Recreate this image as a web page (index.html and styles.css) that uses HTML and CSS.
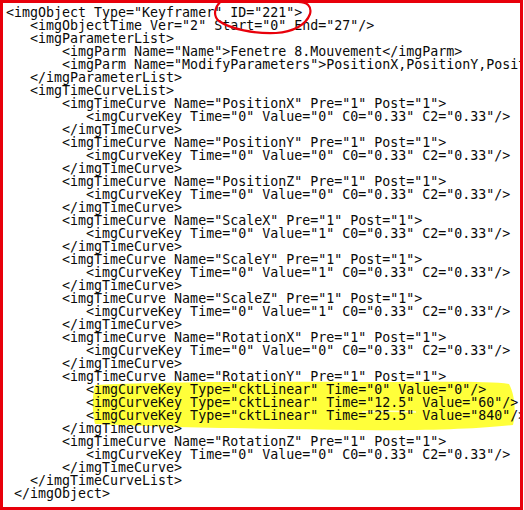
FILE: index.html
```html
<!DOCTYPE html>
<html lang="en">
<head>
<meta charset="utf-8">
<title>imgObject XML</title>
<link rel="stylesheet" href="styles.css">
</head>
<body>
<div class="frame">
<svg class="marker" width="523" height="510" viewBox="0 0 523 510" aria-hidden="true">
  <path class="highlight" d="M95 385 C150 382 260 381 380 382 C440 382 490 381 509 384 C515 395 516 412 513 425 C480 429 420 431 360 430 C260 429 160 427 95 424 C92 412 92 396 95 385 Z"/>
  <path class="streak" d="M362 412 C380 411 400 411 416 412"/>
</svg>
<pre class="code">&lt;imgObject Type="Keyframer" ID="221"&gt;
   &lt;imgObjectTime Ver="2" Start="0" End="27"/&gt;
   &lt;imgParameterList&gt;
       &lt;imgParm Name="Name"&gt;Fenetre 8.Mouvement&lt;/imgParm&gt;
       &lt;imgParm Name="ModifyParameters"&gt;PositionX,PositionY,PositionZ,ScaleX,ScaleY,ScaleZ&lt;/imgParm&gt;
   &lt;/imgParameterList&gt;
   &lt;imgTimeCurveList&gt;
       &lt;imgTimeCurve Name="PositionX" Pre="1" Post="1"&gt;
          &lt;imgCurveKey Time="0" Value="0" C0="0.33" C2="0.33"/&gt;
       &lt;/imgTimeCurve&gt;
       &lt;imgTimeCurve Name="PositionY" Pre="1" Post="1"&gt;
          &lt;imgCurveKey Time="0" Value="0" C0="0.33" C2="0.33"/&gt;
       &lt;/imgTimeCurve&gt;
       &lt;imgTimeCurve Name="PositionZ" Pre="1" Post="1"&gt;
          &lt;imgCurveKey Time="0" Value="0" C0="0.33" C2="0.33"/&gt;
       &lt;/imgTimeCurve&gt;
       &lt;imgTimeCurve Name="ScaleX" Pre="1" Post="1"&gt;
          &lt;imgCurveKey Time="0" Value="1" C0="0.33" C2="0.33"/&gt;
       &lt;/imgTimeCurve&gt;
       &lt;imgTimeCurve Name="ScaleY" Pre="1" Post="1"&gt;
          &lt;imgCurveKey Time="0" Value="1" C0="0.33" C2="0.33"/&gt;
       &lt;/imgTimeCurve&gt;
       &lt;imgTimeCurve Name="ScaleZ" Pre="1" Post="1"&gt;
          &lt;imgCurveKey Time="0" Value="1" C0="0.33" C2="0.33"/&gt;
       &lt;/imgTimeCurve&gt;
       &lt;imgTimeCurve Name="RotationX" Pre="1" Post="1"&gt;
          &lt;imgCurveKey Time="0" Value="0" C0="0.33" C2="0.33"/&gt;
       &lt;/imgTimeCurve&gt;
       &lt;imgTimeCurve Name="RotationY" Pre="1" Post="1"&gt;
          &lt;imgCurveKey Type="cktLinear" Time="0" Value="0"/&gt;
          &lt;imgCurveKey Type="cktLinear" Time="12.5" Value="60"/&gt;
          &lt;imgCurveKey Type="cktLinear" Time="25.5" Value="840"/&gt;
       &lt;/imgTimeCurve&gt;
       &lt;imgTimeCurve Name="RotationZ" Pre="1" Post="1"&gt;
          &lt;imgCurveKey Time="0" Value="0" C0="0.33" C2="0.33"/&gt;
       &lt;/imgTimeCurve&gt;
   &lt;/imgTimeCurveList&gt;
 &lt;/imgObject&gt;</pre>
<svg class="circle" width="523" height="510" viewBox="0 0 523 510" aria-hidden="true">
  <path d="M223 0 C215 5 212 15 219 21 C230 29 255 34 276 33 C293 32 306 25 310 14 C312 6 307 2 298 2"/>
</svg>
</div>
</body>
</html>
```

FILE: styles.css
```css
html, body {
  margin: 0;
  padding: 0;
  background: #ffffff;
}

.frame {
  position: relative;
  box-sizing: border-box;
  width: 523px;
  height: 510px;
  border: 3px solid #e8000b;
  overflow: hidden;
  background: #ffffff;
}

.code {
  position: relative;
  z-index: 1;
  margin: 0;
  padding: 3px 0 0 3px;
  font-family: "DejaVu Sans Mono", "Liberation Mono", monospace;
  font-size: 13.3px;
  line-height: 13px;
  color: #0a0a0a;
  white-space: pre;
}

.marker,
.circle {
  position: absolute;
  left: -3px;
  top: -3px;
}

.marker {
  z-index: 0;
}

.circle {
  z-index: 2;
  fill: none;
  stroke: #e8000b;
  stroke-width: 2.2;
  stroke-linecap: round;
}

.highlight {
  fill: #ffff3a;
}

.streak {
  fill: none;
  stroke: #ffffd0;
  stroke-width: 1.5;
}
```
